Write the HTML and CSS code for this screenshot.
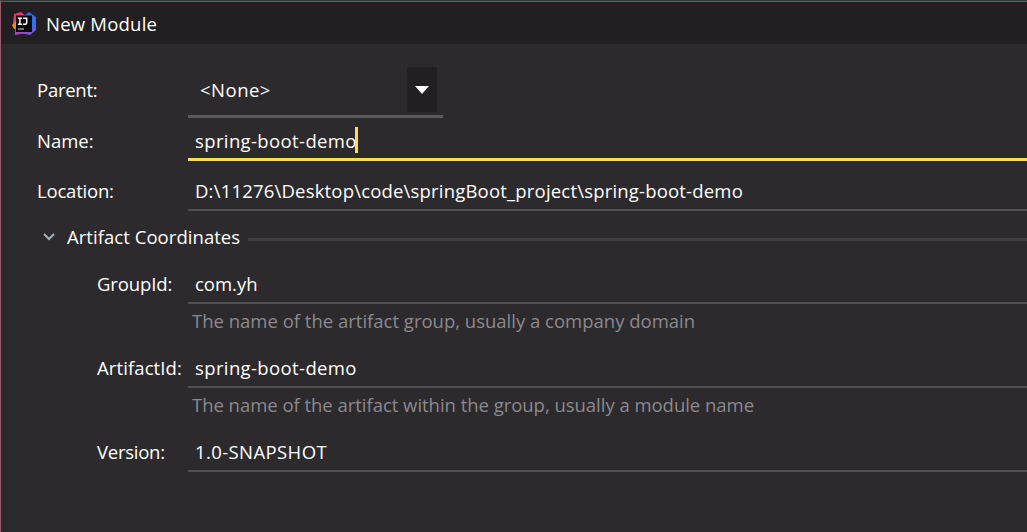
FILE: index.html
```html
<!DOCTYPE html>
<html lang="en">
<head>
<meta charset="utf-8">
<title>New Module</title>
<link rel="stylesheet" href="styles.css">
</head>
<body>
<main class="dialog">
  <header class="titlebar">
    <svg class="logo" width="24" height="24" viewBox="0 0 24 24">
      <defs>
        <linearGradient id="blue" x1="0" y1="0" x2="0" y2="1"><stop offset="0" stop-color="#326de8"/><stop offset=".55" stop-color="#3d6aec"/><stop offset="1" stop-color="#8150d8"/></linearGradient>
        <linearGradient id="pink" x1="0" y1="0" x2="1" y2="1"><stop offset="0" stop-color="#fc2c5f"/><stop offset="1" stop-color="#d43998"/></linearGradient>
      </defs>
      <path d="M11 5 17 0 24 5V18L18 23 8 21Z" fill="url(#blue)"/>
      <path d="M2 2 9 0 14 4 12 13 1 11Z" fill="url(#pink)"/>
      <path d="M0 13 4 9 6 18 2 17Z" fill="#fb8418"/>
      <path d="M3 16 10 18 14 21 3 23Z" fill="#a345c8"/>
      <path d="M4 3.500H20V20H4Z" fill="#08080a"/>
      <path d="M5.800 6.300H10M7.900 6.300V12.300M5.800 12.300H10M11.200 6.300H14.700V10.800Q14.700 12.300 13.200 12.300H11" fill="none" stroke="#fff" stroke-width="1.500"/>
      <path d="M6 17H12" stroke="#bbb" stroke-width="1.200"/>
    </svg>
    <h1 class="title">New Module</h1>
  </header>
  <form class="form">
    <div class="row row-parent">
      <span class="label w-parent">Parent:</span>
      <div class="select"><span class="w-none">&lt;None&gt;</span>
        <span class="arrow"><svg width="14" height="8" viewBox="0 0 14 8"><path d="M0 0H14L7 8Z" fill="#fff"/></svg></span>
      </div>
    </div>
    <div class="row row-name"><span class="label">Name:</span><div class="field focused"><span class="w-demo">spring-boot-demo</span><i class="caret"></i></div></div>
    <div class="row row-location"><span class="label w-location">Location:</span><div class="field"><span class="w-path">D:\11276\Desktop\code\springBoot_project\spring-boot-demo</span></div></div>
    <div class="section">
      <svg class="chevron" width="12" height="8" viewBox="0 0 12 8"><path d="M1 1 6 6 11 1" fill="none" stroke="#a5afb5" stroke-width="2"/></svg>
      <span class="w-section">Artifact Coordinates</span><div class="rule"></div>
    </div>
    <div class="row row-sub"><span class="label sub w-group">GroupId:</span><div class="field"><span>com.yh</span></div></div>
    <p class="hint">The name of the artifact group, usually a company domain</p>
    <div class="row row-sub"><span class="label sub w-artifact">ArtifactId:</span><div class="field"><span class="w-demo">spring-boot-demo</span></div></div>
    <p class="hint w-hint">The name of the artifact within the group, usually a module name</p>
    <div class="row row-sub"><span class="label sub w-version">Version:</span><div class="field"><span class="w-snapshot">1.0-SNAPSHOT</span></div></div>
  </form>
</main>
</body>
</html>
```
FILE: styles.css
```css
* { box-sizing: border-box; }
body { margin: 0; background: #2d2a2e; color: #fff; font: 18.5px/26px "Open Sans", "Noto Sans", sans-serif; white-space: nowrap; overflow: hidden; }
.dialog { height: 532px; border-left: 1px solid #945b68; border-top: 1px solid #343136; }
.titlebar { display: flex; align-items: center; height: 43px; padding: 2px 0 0 11px; background: #221f22; border-top: 1px solid #7d505b; }
.title { margin: 0 0 0 10px; font-size: 18.5px; font-weight: 400; letter-spacing: .22px; }
.form { display: flex; flex-direction: column; }
.row { display: grid; grid-template-columns: 187px 1fr; }
.label { display: flex; align-items: center; padding-left: 36px; }
.label.sub { padding: 0 0 2px 96px; }
.row-parent { height: 74px; padding-top: 20px; }
.row-parent .label { padding-bottom: 2px; }
.select { display: flex; justify-content: space-between; align-items: center; width: 255px; border-bottom: 3px solid #5b595c; padding: 2px 6px 2px 12px; }
.arrow { display: flex; align-items: center; justify-content: center; width: 30px; height: 45px; background: #221f22; }
.row-name { height: 43px; }
.row-name .label { padding-top: 2px; }
.row-location { height: 50px; padding-top: 10px; }
.row-location .field { padding-top: 2px; }
.field { display: flex; align-items: center; padding-left: 7px; border-bottom: 2px solid #525053; }
.row .focused { padding-top: 6px; border-bottom: 3px solid #ffd866; }
.caret { width: 3px; height: 26px; margin: -2px 0 0 -2px; background: #ffd866; }
.section { display: flex; align-items: center; height: 54px; padding: 0 0 2px 42px; }
.chevron { margin-right: 12px; }
.rule { flex: 1; height: 3px; margin: 4px 0 0 8px; background: #403e41; }
.row-sub { height: 39px; }
.hint { height: 45px; margin: 0; padding: 4px 0 0 191px; color: #8b898c; }
.w-parent { letter-spacing: -.25px; }
.w-none { letter-spacing: .5px; }
.w-demo { letter-spacing: .38px; }
.w-location { letter-spacing: -.2px; }
.w-path { letter-spacing: .19px; }
.w-section { letter-spacing: .05px; }
.w-group { letter-spacing: -.12px; }
.w-artifact { letter-spacing: .1px; }
.w-hint { letter-spacing: -.03px; }
.w-version { letter-spacing: -.25px; }
.w-snapshot { letter-spacing: .4px; }
```
